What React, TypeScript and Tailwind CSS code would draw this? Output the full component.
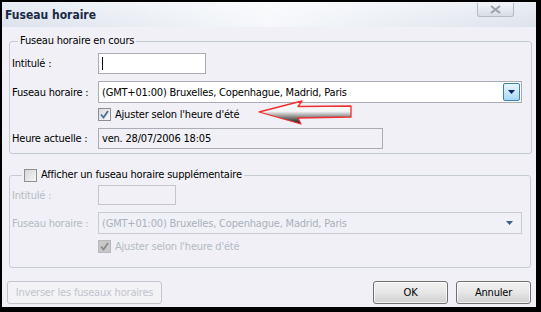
import React from "react";

const font = { fontFamily: '"DejaVu Sans Condensed", "DejaVu Sans", Tahoma, sans-serif' };

function Check({ disabled }: { disabled?: boolean }) {
  return (
    <span
      className={`inline-flex h-[13px] w-[13px] items-center justify-center border ${
        disabled ? "border-[#b8b8b8] bg-[#c8c8c8]" : "border-[#8e8f8f] bg-gradient-to-br from-[#dcdcdc] to-[#f8f8f8]"
      }`}
    >
      <svg width="9" height="9" viewBox="0 0 9 9">
        <path
          d="M1 4.5 L3.5 7.5 L8 1"
          fill="none"
          stroke={disabled ? "#8a8a8a" : "#4a6e9c"}
          strokeWidth="1.8"
        />
      </svg>
    </span>
  );
}

function EmptyCheck() {
  return (
    <span className="inline-block h-[13px] w-[13px] border border-[#8e8f8f] bg-gradient-to-br from-[#d6d6d6] to-[#f6f6f6]" />
  );
}

function Arrow() {
  return (
    <svg width="96" height="26" viewBox="0 0 96 26" className="ml-[19px] -mt-[4px]">
      <defs>
        <linearGradient id="ag" x1="0" y1="0" x2="0" y2="1">
          <stop offset="0" stopColor="#ffffff" />
          <stop offset="0.45" stopColor="#f4f4f4" />
          <stop offset="0.75" stopColor="#707070" />
          <stop offset="1" stopColor="#101010" />
        </linearGradient>
      </defs>
      <polygon
        points="1,12 44,1 40,6.5 93,6 93,17 40,18 43,24"
        fill="url(#ag)"
        stroke="#ee3030"
        strokeWidth="1.3"
        strokeLinejoin="round"
      />
    </svg>
  );
}

function Select({ disabled }: { disabled?: boolean }) {
  return (
    <div
      className={`flex h-[22px] flex-1 items-center border ${
        disabled ? "border-[#c8ccd2] bg-[#f0f1f6]" : "border-[#a9adb4] bg-white"
      }`}
    >
      <span className={`ml-[3px] flex-1 ${disabled ? "text-[#aab0bc]" : "text-black"}`}>
        (GMT+01:00) Bruxelles, Copenhague, Madrid, Paris
      </span>
      {disabled ? (
        <span className="mr-[3px] flex h-[17px] w-[17px] items-center justify-center">
          <svg width="7" height="4" viewBox="0 0 7 4">
            <polygon points="0,0 7,0 3.5,4" fill="#3a5f8e" />
          </svg>
        </span>
      ) : (
        <span className="mr-[1px] flex h-[18px] w-[17px] items-center justify-center rounded-[2px] border border-[#3c7fb1] bg-gradient-to-b from-[#eaf6fd] to-[#a7d9f5]">
          <svg width="7" height="4" viewBox="0 0 7 4">
            <polygon points="0,0 7,0 3.5,4" fill="#0a246a" />
          </svg>
        </span>
      )}
    </div>
  );
}

export default function App() {
  return (
    <div
      className="flex h-[312px] w-[541px] bg-black pb-[5px] pl-[2px] pr-[5px] pt-[2px] text-[11px] leading-[13px] tracking-[-0.2px]"
      style={font}
    >
      <div className="flex flex-1 flex-col bg-[#f0f0f6]">
        {/* Title bar */}
        <div className="relative flex h-[25px] items-center bg-gradient-to-r from-[#dbe2ec] via-[#f6f8fb] to-[#dde3ec]">
          <div className="absolute inset-0 bg-gradient-to-b from-white/40 to-transparent" />
          <span className="relative ml-[3px] mt-[1px] text-[12px] font-bold tracking-[0px] text-[#1a2a44]">Fuseau horaire</span>
          <div className="relative ml-auto mr-[22px] -mt-[9px] flex h-[14px] w-[37px] items-center justify-center rounded-b-[3px] border border-t-0 border-[#b4bcc8] bg-gradient-to-b from-[#f2f4f8] to-[#d8dde6]">
            <svg width="11" height="9" viewBox="0 0 11 9">
              <path d="M1 1 L10 8 M10 1 L1 8" stroke="#9aa2ae" strokeWidth="2" />
            </svg>
          </div>
        </div>

        {/* Group 1 */}
        <fieldset className="ml-[7px] mr-[4px] mt-[7px] rounded-[3px] border border-[#c5cbd3] pb-[4px] pl-[2px] pr-[9px]">
          <legend className="ml-[6px] px-[2px] leading-[14px] text-black">Fuseau horaire en cours</legend>
          <div className="mt-[5px] flex items-center">
            <span className="w-[86px]">Intitulé :</span>
            <div className="flex h-[21px] w-[108px] items-center border border-[#a9adb4] bg-white">
              <span className="ml-[3px] h-[13px] w-[1px] bg-black" />
            </div>
          </div>
          <div className="mt-[7px] flex items-center">
            <span className="w-[86px]">Fuseau horaire :</span>
            <Select />
          </div>
          <div className="mt-[3px] flex h-[17px] items-center pl-[86px]">
            <Check />
            <span className="ml-[4px]">Ajuster selon l'heure d'été</span>
            <Arrow />
          </div>
          <div className="mt-[5px] flex items-center">
            <span className="w-[86px]">Heure actuelle :</span>
            <div className="flex h-[21px] w-[285px] items-center border border-[#a9adb4] bg-[#f0f0f6]">
              <span className="ml-[3px]">ven. 28/07/2006 18:05</span>
            </div>
          </div>
        </fieldset>

        {/* Group 2 */}
        <fieldset className="ml-[7px] mr-[5px] mt-[14px] rounded-[3px] border border-[#c5cbd3] pb-[12px] pl-[2px] pr-[8px]">
          <legend className="ml-[10px] flex items-center px-[2px] leading-[14px] text-black">
            <EmptyCheck />
            <span className="ml-[4px]">Afficher un fuseau horaire supplémentaire</span>
          </legend>
          <div className="mt-[3px] flex items-center text-[#b4bac4]">
            <span className="w-[86px]">Intitulé :</span>
            <div className="h-[20px] w-[78px] border border-[#c3c7cd] bg-[#f0f0f6]" />
          </div>
          <div className="mt-[7px] flex items-center text-[#b4bac4]">
            <span className="w-[86px]">Fuseau horaire :</span>
            <Select disabled />
          </div>
          <div className="mt-[4px] flex h-[17px] items-center pl-[86px] text-[#b4bac4]">
            <Check disabled />
            <span className="ml-[4px]">Ajuster selon l'heure d'été</span>
          </div>
        </fieldset>

        {/* Buttons */}
        <div className="mt-[13px] flex items-center pl-[5px] pr-[5px]">
          <div className="flex h-[23px] w-[155px] items-center justify-center rounded-[3px] border border-[#c2c6cc] bg-[#f3f3f6] text-[#c0c4cc]">
            Inverser les fuseaux horaires
          </div>
          <div className="ml-auto flex h-[23px] w-[75px] items-center justify-center rounded-[3px] border border-[#707070] bg-gradient-to-b from-[#f2f2f2] via-[#e6e6e6] to-[#cfcfcf] text-black shadow-[inset_0_0_0_1px_rgba(255,255,255,0.7)]">
            OK
          </div>
          <div className="ml-[8px] flex h-[23px] w-[75px] items-center justify-center rounded-[3px] border border-[#707070] bg-gradient-to-b from-[#f2f2f2] via-[#e6e6e6] to-[#cfcfcf] text-black shadow-[inset_0_0_0_1px_rgba(255,255,255,0.7)]">
            Annuler
          </div>
        </div>
      </div>
    </div>
  );
}
